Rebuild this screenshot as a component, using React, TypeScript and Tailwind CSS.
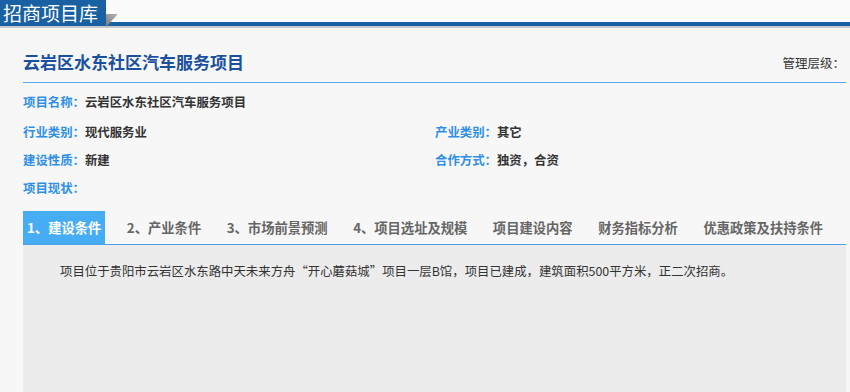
const fields: [string, string, string?, string?][] = [
  ['项目名称：', '云岩区水东社区汽车服务项目'],
  ['行业类别：', '现代服务业', '产业类别：', '其它'],
  ['建设性质：', '新建', '合作方式：', '独资，合资'],
  ['项目现状：', ''],
]

const tabs = [
  '1、建设条件',
  '2、产业条件',
  '3、市场前景预测',
  '4、项目选址及规模',
  '项目建设内容',
  '财务指标分析',
  '优惠政策及扶持条件',
]

export default function App() {
  return (
    <div
      className="w-[850px] h-[392px] overflow-hidden bg-[#f7f7f7]"
      style={{ fontFamily: '"Noto Sans CJK SC", "Microsoft YaHei", sans-serif' }}
    >
      {/* top bar */}
      <div className="relative flex items-end h-[28px] bg-[#fbfbfb] border-b-2 border-[#c9c9c9]">
        <div className="w-[106px] h-[26px] bg-[#1961a2] text-white text-[19px] leading-[25px] pl-[3px]">
          招商项目库
        </div>
        <div className="flex-1 h-[4px] bg-[#1961a2]" />
        <svg className="absolute left-[106px] top-[14px]" width="12" height="13" viewBox="0 0 12 13">
          <defs>
            <linearGradient id="fold" x1="1" y1="0" x2="0" y2="1">
              <stop offset="0" stopColor="#b8b8b8" />
              <stop offset="1" stopColor="#7a7a7a" />
            </linearGradient>
          </defs>
          <polygon points="0,0 12,0 0,13" fill="url(#fold)" />
        </svg>
      </div>

      <div className="pl-[23px] pr-[4px]">
        {/* title */}
        <div className="flex justify-between pt-[21px] pb-[6px] border-b border-[#5fa8ec]">
          <h1 className="text-[17px] leading-[26px] font-bold text-[#1b509e]">云岩区水东社区汽车服务项目</h1>
          <span className="text-[12.5px] leading-[26px] text-[#333] pr-[1px] pt-[1px]">管理层级：</span>
        </div>

        {/* fields */}
        <div className="pt-[5px] text-[12.4px] font-bold">
          {fields.map(([l1, v1, l2, v2], i) => (
            <div key={i} className={`flex h-[28px] items-center ${i === 0 ? 'mb-[2px]' : ''}`}>
              <div className="w-[412px]">
                <span className="text-[#2f8fe8]">{l1}</span>
                <span className="text-[#333]">{v1}</span>
              </div>
              {l2 && (
                <div>
                  <span className="text-[#2f8fe8]">{l2}</span>
                  <span className="text-[#333]">{v2}</span>
                </div>
              )}
            </div>
          ))}
        </div>

        {/* tabs */}
        <div className="mt-[9px] flex gap-[17.5px] border-b border-[#4f9fe8]">
          {tabs.map((t, i) => (
            <div
              key={t}
              className={`h-[33px] px-[4px] flex items-center text-[13.3px] font-bold ${
                i === 0 ? 'bg-[#46adf5] text-white' : 'text-[#666]'
              }`}
            >
              {t}
            </div>
          ))}
        </div>

        <div className="h-[160px] bg-[#ececec] pl-[37px] pt-[16px]">
          <p className="text-[12.4px] leading-[20px] text-[#333]">
            项目位于贵阳市云岩区水东路中天未来方舟“开心蘑菇城”项目一层B馆，项目已建成，建筑面积500平方米，正二次招商。
          </p>
        </div>
      </div>
    </div>
  )
}
